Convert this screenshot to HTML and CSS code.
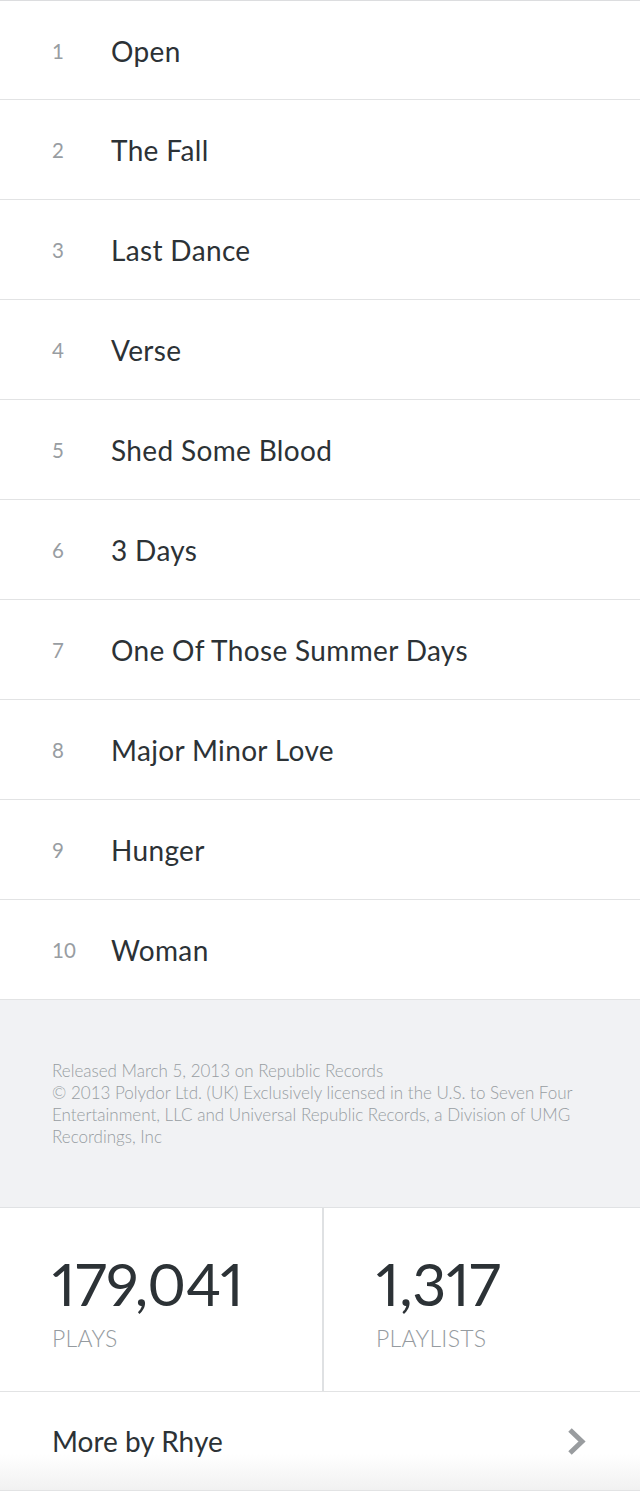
FILE: index.html
```html
<!DOCTYPE html>
<html>
<head>
<meta charset="utf-8">
<link rel="stylesheet" href="styles.css">
</head>
<body>
<div class="page">
  <ul class="tracks">
    <li class="track"><span class="num">1</span><span class="title">Open</span></li>
    <li class="track"><span class="num">2</span><span class="title">The Fall</span></li>
    <li class="track"><span class="num">3</span><span class="title">Last Dance</span></li>
    <li class="track"><span class="num">4</span><span class="title">Verse</span></li>
    <li class="track"><span class="num">5</span><span class="title">Shed Some Blood</span></li>
    <li class="track"><span class="num">6</span><span class="title">3 Days</span></li>
    <li class="track"><span class="num">7</span><span class="title">One Of Those Summer Days</span></li>
    <li class="track"><span class="num">8</span><span class="title">Major Minor Love</span></li>
    <li class="track"><span class="num">9</span><span class="title">Hunger</span></li>
    <li class="track"><span class="num">10</span><span class="title">Woman</span></li>
  </ul>
  <div class="credits">
    <p>Released March 5, 2013 on Republic Records<br>© 2013 Polydor Ltd. (UK) Exclusively licensed in the U.S. to Seven Four<br>Entertainment, LLC and Universal Republic Records, a Division of UMG<br>Recordings, Inc</p>
  </div>
  <div class="stats">
    <div class="stat">
      <div class="stat-value">179,041</div>
      <div class="stat-label">PLAYS</div>
    </div>
    <div class="stat stat-right">
      <div class="stat-value">1,317</div>
      <div class="stat-label">PLAYLISTS</div>
    </div>
  </div>
  <div class="more">
    <span class="more-label">More by Rhye</span>
    <svg class="chev" width="20" height="27" viewBox="0 0 20 27"><polyline points="3,2 15,13.5 3,25" fill="none" stroke="#999c9f" stroke-width="5"/></svg>
  </div>
</div>
</body>
</html>
```

FILE: styles.css
```css
* { box-sizing: border-box; }
html, body { margin: 0; padding: 0; background: #fff; }
body { font-family: Lato, "Open Sans", sans-serif; width: 640px; }
.page { width: 640px; }

.tracks { list-style: none; margin: 0; padding: 0; }
.track {
  height: 100px;
  border-bottom: 1px solid #e2e3e4;
  display: flex;
  align-items: center;
  padding-left: 52px;
  padding-top: 1px;
}
.track:first-child { border-top: 1px solid #dcdddf; }
.num {
  width: 59px;
  font-size: 20.5px;
  color: #989da2;
  font-weight: 400;
}
.title {
  font-size: 28px;
  color: #2c3236;
  font-weight: 400;
  letter-spacing: 0.35px;
}

.credits {
  background: #f1f2f4;
  border-bottom: 1px solid #e0e2e4;
  padding: 60px 52px 59px;
}
.credits p {
  margin: 0;
  font-size: 17px;
  line-height: 22px;
  color: #979da2;
  font-weight: 300;
  white-space: nowrap;
}

.stats {
  display: flex;
  border-bottom: 1px solid #e2e3e4;
  height: 184px;
}
.stat {
  width: 322px;
  padding: 40px 0 0 52px;
}
.stat-right {
  width: 318px;
  border-left: 2px solid #dfe1e3;
}
.stat-value {
  font-size: 59px;
  font-weight: 400;
  color: #2c3236;
  line-height: 72px;
  letter-spacing: -0.2px;
  font-variant-numeric: proportional-nums;
}
.stat-label {
  font-size: 23px;
  font-weight: 300;
  color: #959ba0;
  line-height: 30px;
  margin-top: 3px;
  letter-spacing: 0.3px;
}

.more {
  height: 99px;
  border-bottom: 1px solid #e2e3e4;
  display: flex;
  align-items: center;
  justify-content: space-between;
  padding: 0 52px 0 52px;
  background: linear-gradient(to bottom, #ffffff 0px, #ffffff 62px, #f1f1f1 98px);
}
.more-label {
  font-size: 28px;
  color: #2c3236;
  font-weight: 400;
}
.chev { display: block; margin-right: 1px; }
```
